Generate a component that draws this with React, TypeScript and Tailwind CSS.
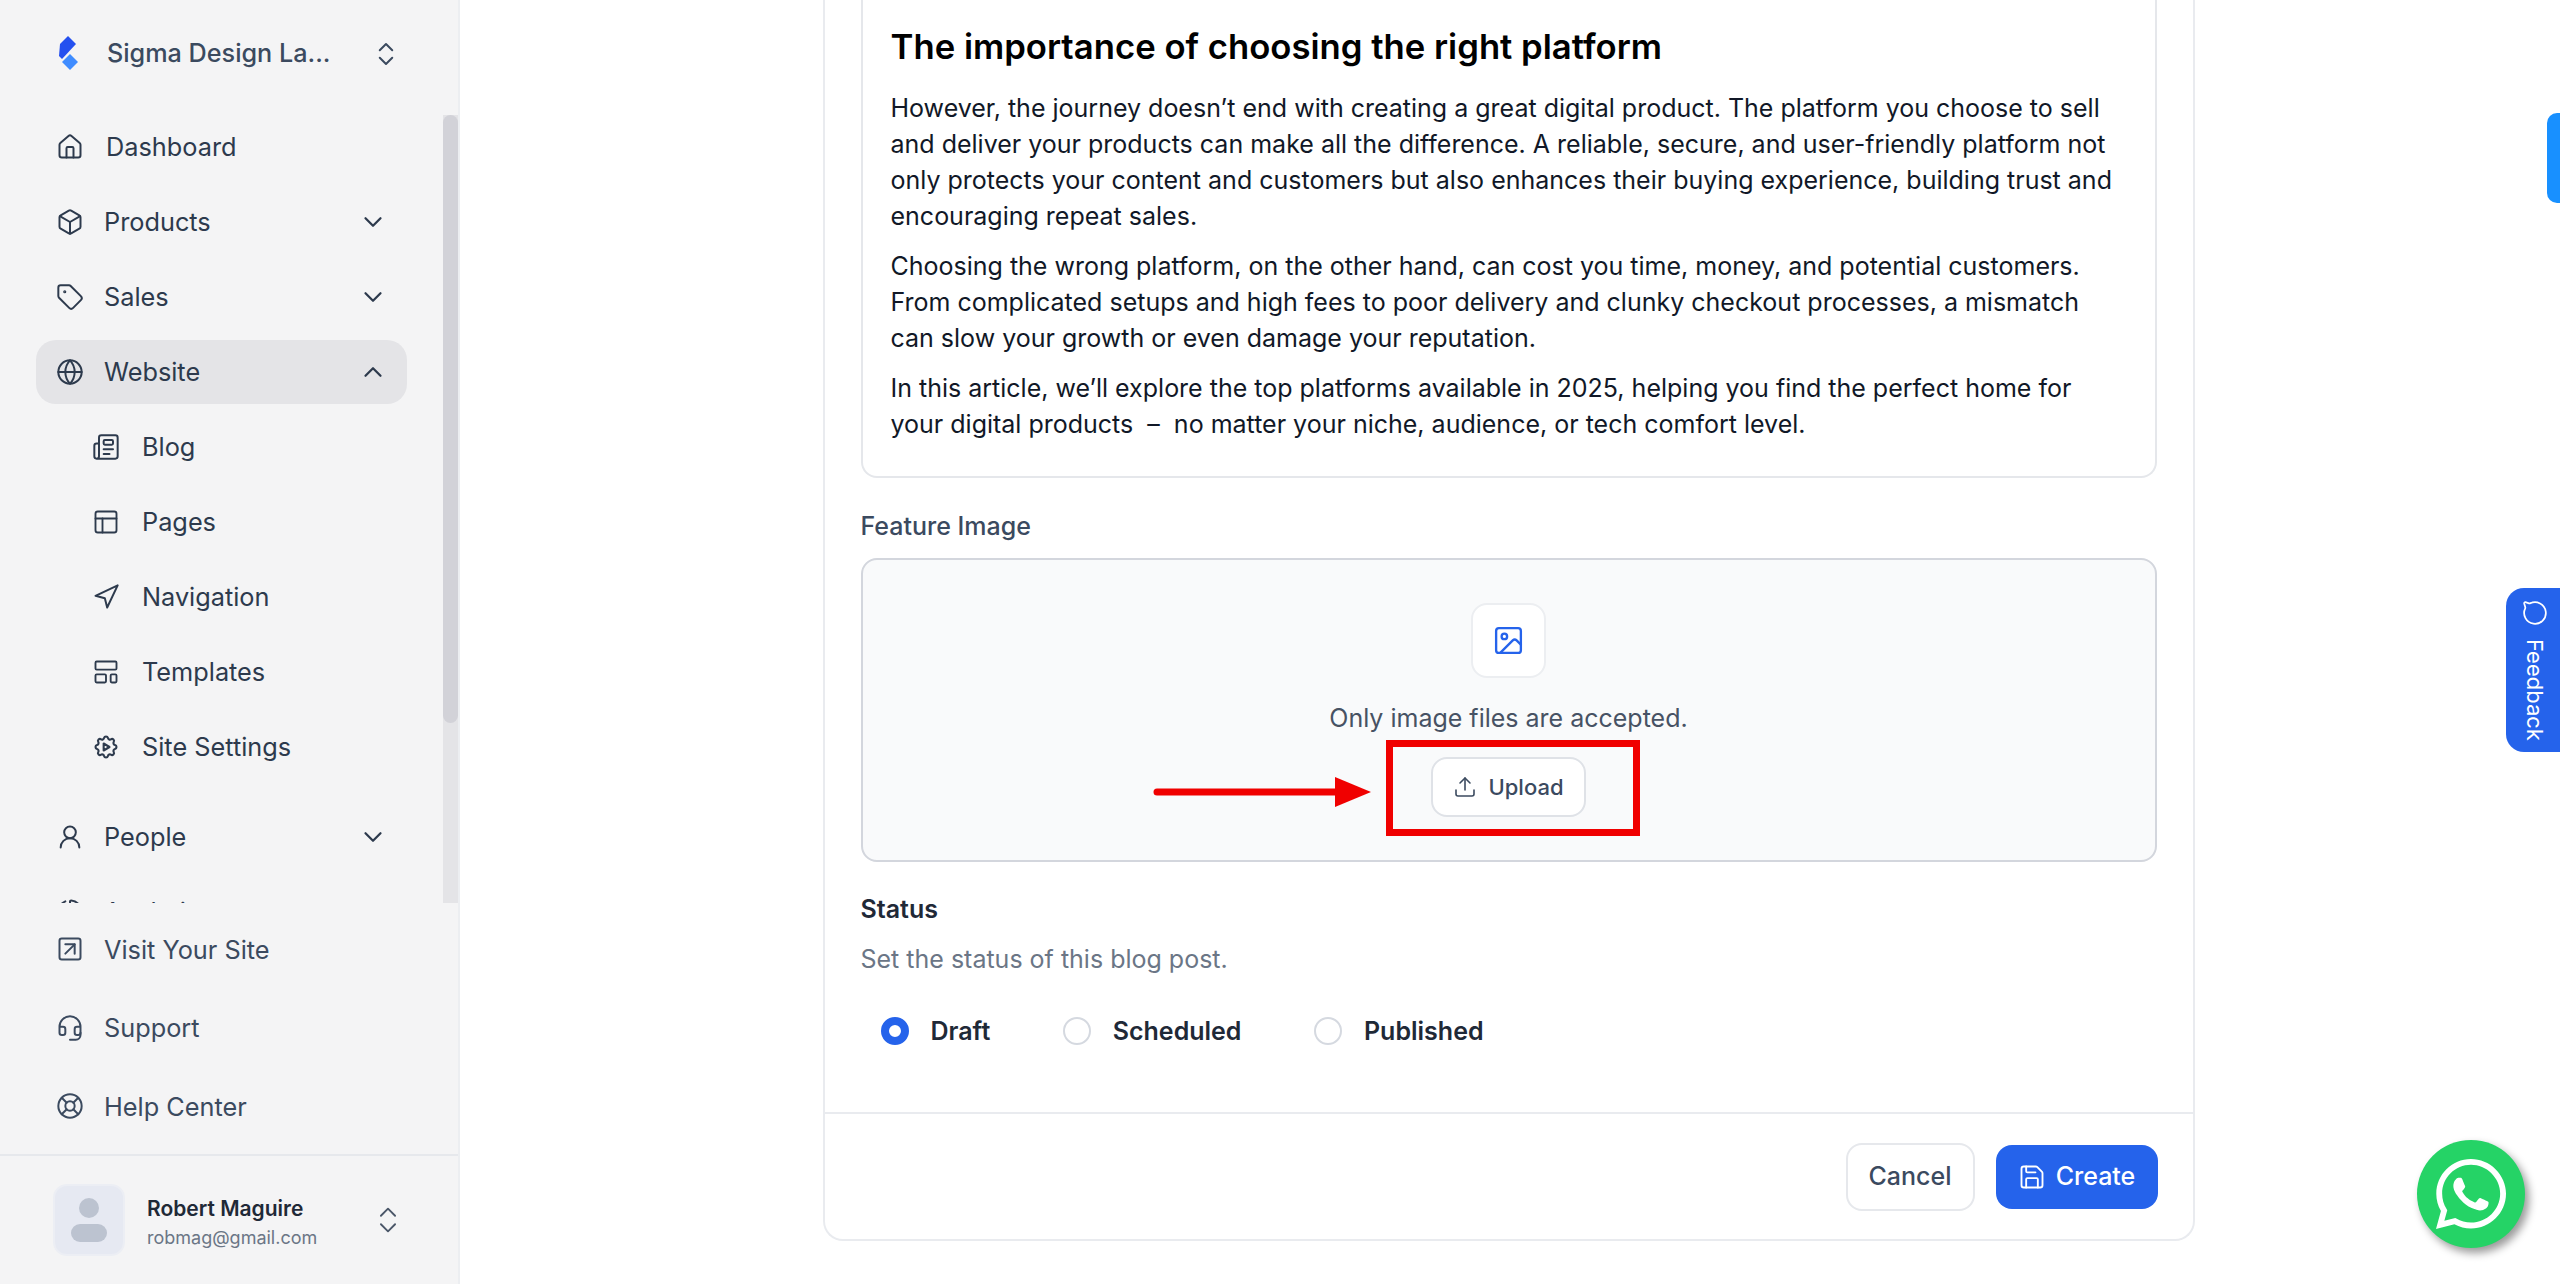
import type { ReactNode } from "react";
import {
  Box,
  ChartPie,
  ChevronDown,
  ChevronUp,
  ChevronsUpDown,
  Globe,
  Headset,
  House,
  Image,
  LayoutTemplate,
  LifeBuoy,
  MessageCircle,
  Navigation,
  Newspaper,
  PanelsTopLeft,
  Save,
  SquareArrowUpRight,
  Tag,
  Upload,
  UserRound,
} from "lucide-react";
import { FaWhatsapp } from "react-icons/fa";
import { TbSettingsAutomation } from "react-icons/tb";

const font = "font-['Inter',sans-serif]";

function Logo() {
  return (
    <svg width="22" height="36" viewBox="0 0 22 36" className="shrink-0">
      <path d="M10 0 L18 8 L4 23 L1 20 L2 8 Z" fill="#2450ef" />
      <path d="M12 18 L20 26 L12 34 L4 26 Z" fill="#3f8cff" />
    </svg>
  );
}

function NavItem({
  icon,
  label,
  chevron,
  active,
  sub,
  textClass,
}: {
  icon: ReactNode;
  label: string;
  chevron?: "up" | "down";
  active?: boolean;
  sub?: boolean;
  textClass?: string;
}) {
  return (
    <div
      className={`flex h-[64px] shrink-0 items-center rounded-[20px] ${active ? "bg-[#e4e4e7]" : ""} ${sub ? "pl-[56px]" : "pl-[20px]"} pr-[22px] mb-[11px]`}
    >
      <div className="flex w-[28px] shrink-0 items-center justify-center text-[#2d3a4d]">{icon}</div>
      <span className={`text-[25.3px] leading-none text-[#2d3a4d] ${textClass ?? "ml-[20px]"}`}>{label}</span>
      {chevron === "down" && <ChevronDown className="ml-auto mr-[-3px] text-[#2d3a4d]" size={30} strokeWidth={1.8} />}
      {chevron === "up" && <ChevronUp className="ml-auto mr-[-3px] text-[#2d3a4d]" size={30} strokeWidth={1.8} />}
    </div>
  );
}

function FooterLink({ icon, label }: { icon: ReactNode; label: string }) {
  return (
    <div className="flex h-[78.5px] items-center pl-[56px]">
      <div className="flex w-[28px] items-center justify-center text-[#3b4a5f]">{icon}</div>
      <span className="ml-[20px] text-[25.3px] leading-none text-[#3b4a5f]">{label}</span>
    </div>
  );
}

function Sidebar() {
  return (
    <aside className="flex h-full w-[460px] shrink-0 flex-col border-r-2 border-[#eceef1] bg-[#f4f4f5]">
      <div className="flex h-[108px] shrink-0 items-center pl-[58px] pr-[57px]">
        <Logo />
        <span className="ml-[27px] flex-1 text-[25.2px] font-medium leading-none text-[#3b4a5f]">Sigma Design La...</span>
        <ChevronsUpDown size={30} strokeWidth={1.6} className="text-[#3b4a5f]" />
      </div>

      <div className="flex h-[795px] shrink-0 overflow-hidden">
        <nav className="flex-1 pl-[36px] pr-[36px] pt-[7px]">
          <NavItem icon={<House size={28} strokeWidth={1.7} />} label="Dashboard" textClass="ml-[22px]" />
          <NavItem icon={<Box size={28} strokeWidth={1.7} />} label="Products" chevron="down" />
          <NavItem icon={<Tag size={28} strokeWidth={1.7} />} label="Sales" chevron="down" />
          <NavItem icon={<Globe size={28} strokeWidth={1.7} />} label="Website" chevron="up" active />
          <NavItem icon={<Newspaper size={28} strokeWidth={1.7} />} label="Blog" sub textClass="ml-[22px]" />
          <NavItem icon={<PanelsTopLeft size={30} strokeWidth={1.6} />} label="Pages" sub textClass="ml-[22px]" />
          <NavItem icon={<Navigation size={28} strokeWidth={1.7} />} label="Navigation" sub textClass="ml-[22px]" />
          <NavItem icon={<LayoutTemplate size={30} strokeWidth={1.6} />} label="Templates" sub textClass="ml-[22px]" />
          <NavItem icon={<TbSettingsAutomation size={30} strokeWidth={1.8} />} label="Site Settings" sub textClass="ml-[22px]" />
          <div className="h-[15px]" />
          <NavItem icon={<UserRound size={28} strokeWidth={1.7} />} label="People" chevron="down" />
          <NavItem icon={<ChartPie size={28} strokeWidth={1.7} />} label="Analytics" chevron="down" />
        </nav>
        <div className="mt-[7px] flex w-[15px] shrink-0 flex-col bg-[#e4e4e7]">
          <div className="h-[608px] rounded-full bg-[#d2d2d8]" />
        </div>
      </div>

      <div className="flex h-[251px] shrink-0 flex-col pt-[7px]">
        <FooterLink icon={<SquareArrowUpRight size={28} strokeWidth={1.7} />} label="Visit Your Site" />
        <FooterLink icon={<Headset size={28} strokeWidth={1.7} />} label="Support" />
        <FooterLink icon={<LifeBuoy size={28} strokeWidth={1.7} />} label="Help Center" />
      </div>

      <div className="flex flex-1 items-center border-t-2 border-[#e6e8ec] pl-[53px] pr-[53px]">
        <div className="flex h-[72px] w-[72px] shrink-0 flex-col items-center justify-center gap-[6px] rounded-[14px] border-2 border-[#eceef4] bg-[#e6e9f2]">
          <div className="h-[20px] w-[20px] rounded-full bg-[#bcc3d0]" />
          <div className="h-[18px] w-[36px] rounded-full bg-[#bcc3d0]" />
        </div>
        <div className="ml-[22px] flex flex-1 flex-col gap-[10px] pt-[4px]">
          <span className="text-[21px] font-semibold leading-none text-[#1f2937]">Robert Maguire</span>
          <span className="text-[18px] leading-none text-[#6b7686]">robmag@gmail.com</span>
        </div>
        <ChevronsUpDown size={34} strokeWidth={1.3} className="text-[#4a5668]" />
      </div>
    </aside>
  );
}

function Radio({ label, checked }: { label: string; checked?: boolean }) {
  return (
    <div className="flex items-center gap-[22px]">
      {checked ? (
        <div className="h-[28px] w-[28px] rounded-full border-[8px] border-[#2563eb] bg-white" />
      ) : (
        <div className="h-[28px] w-[28px] rounded-full border-2 border-[#d5d9e0] bg-white" />
      )}
      <span className="text-[25px] font-semibold leading-none text-[#1f2937]">{label}</span>
    </div>
  );
}

function UploadArea() {
  return (
    <div className="relative flex h-[304px] flex-col items-center rounded-[16px] border-2 border-[#d3d6dd] bg-[#f9fafb] pt-[43px]">
      <div className="flex h-[75px] w-[75px] items-center justify-center rounded-[16px] border-2 border-[#eceef1] bg-white">
        <Image size={33} strokeWidth={1.7} className="text-[#2563eb]" />
      </div>
      <p className="mt-[25px] text-[25px] leading-[30px] text-[#475264]">Only image files are accepted.</p>
      <div className="mt-[24px] flex h-[60px] w-[155px] items-center justify-center gap-[11px] rounded-[16px] border-2 border-[#dfe2e7] bg-white">
        <Upload size={24} strokeWidth={1.6} className="text-[#3b4a5f]" />
        <span className="text-[22px] font-medium leading-none text-[#3b4a5f]">Upload</span>
      </div>

      {/* annotation drawn over the shot */}
      <div className="absolute left-[523px] top-[180px] h-[96px] w-[254px] border-[7px] border-[#f00000]" />
      <svg className="absolute left-[290px] top-[217px]" width="220" height="30" viewBox="0 0 220 30">
        <path d="M4 15 H184" stroke="#f00000" strokeWidth="7" strokeLinecap="round" />
        <path d="M182 0 L218 15 L182 30 Z" fill="#f00000" />
      </svg>
    </div>
  );
}

function Card() {
  return (
    <div className="mx-auto w-[1372px] rounded-b-[20px] border-2 border-t-0 border-[#e9ebef] bg-white">
      <div className="px-[36px]">
        <div className="h-[478px] rounded-b-[16px] border-2 border-t-0 border-[#e5e7eb] pl-[28px] pr-[30px] pt-[24px] text-[25px] leading-[36px] text-[#111827]">
          <h2 className="text-[34.7px] font-semibold leading-[44px] text-black">The importance of choosing the right platform</h2>
          <p className="mt-[22px]">
            However, the journey doesn’t end with creating a great digital product. The platform you choose to sell and deliver your products can make all the difference. A reliable, secure, and user-friendly platform not only protects your content and customers but also enhances their buying experience, building trust and encouraging repeat sales.
          </p>
          <p className="mt-[14px]">
            Choosing the wrong platform, on the other hand, can cost you time, money, and potential customers. From complicated setups and high fees to poor delivery and clunky checkout processes, a mismatch can slow your growth or even damage your reputation.
          </p>
          <p className="mt-[14px]">
            In this article, we’ll explore the top platforms available in 2025, helping you find the perfect home for your digital products &nbsp;–&nbsp; no matter your niche, audience, or tech comfort level.
          </p>
        </div>

        <p className="mt-[33px] text-[25px] font-medium leading-[30px] text-[#3b4a5f]">Feature Image</p>
        <div className="mt-[17px]">
          <UploadArea />
        </div>

        <p className="mt-[32px] text-[25px] font-semibold leading-[30px] text-[#1f2937]">Status</p>
        <p className="mt-[20px] text-[25px] leading-[30px] text-[#6b7686]">Set the status of this blog post.</p>
        <div className="ml-[20px] mt-[43px] flex items-center gap-[72.5px]">
          <Radio label="Draft" checked />
          <Radio label="Scheduled" />
          <Radio label="Published" />
        </div>
      </div>

      <div className="mt-[67px] flex h-[127px] items-center justify-end gap-[21px] border-t-2 border-[#e9ebef] pr-[35px]">
        <div className="flex h-[68px] w-[129px] items-center justify-center rounded-[16px] border-2 border-[#e6e8ec] bg-white text-[25px] font-medium leading-none text-[#3b4a5f]">
          Cancel
        </div>
        <div className="flex h-[64px] w-[162px] items-center justify-center gap-[10px] rounded-[16px] bg-[#2563eb] text-[25px] font-medium leading-none text-white">
          <Save size={28} strokeWidth={1.6} />
          Create
        </div>
      </div>
    </div>
  );
}

export default function App() {
  return (
    <div className={`relative flex h-[1284px] w-[2560px] overflow-hidden bg-white ${font}`}>
      <Sidebar />
      <main className="min-w-0 flex-1 pr-[3px]">
        <Card />
      </main>

      {/* floating widgets */}
      <div className="absolute right-0 top-[113px] h-[90px] w-[13px] rounded-l-[10px] bg-[#1890ff]" />
      <div className="absolute right-0 top-[588px] flex h-[164px] w-[54px] flex-col items-center justify-center gap-[13px] rounded-l-[18px] bg-[#2563eb] pl-[3px] text-white">
        <MessageCircle size={26} strokeWidth={1.6} className="rotate-90" />
        <span className="text-[22px] leading-none [writing-mode:vertical-rl]">Feedback</span>
      </div>
      <div className="absolute left-[2417px] top-[1140px] flex h-[108px] w-[108px] items-center justify-center rounded-full bg-[#25d366] text-white shadow-[4px_5px_8px_rgba(0,0,0,0.4)]">
        <FaWhatsapp size={80} />
      </div>
    </div>
  );
}
